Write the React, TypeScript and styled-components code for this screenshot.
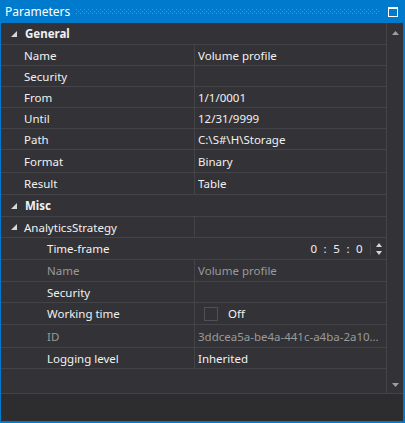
import React from "react";
import styled, { createGlobalStyle } from "styled-components";

const Global = createGlobalStyle`
  html, body { margin: 0; padding: 0; background: #2d2d30; }
  body { font-family: "Noto Sans", "Open Sans", sans-serif; font-size: 11.5px; }
`;

const Window = styled.div`
  width: 405px;
  height: 423px;
  box-sizing: border-box;
  background: #007acc;
  padding: 0 2px 2px 1px;
  display: flex;
  flex-direction: column;
  overflow: hidden;
`;

const TitleBar = styled.div`
  height: 23px;
  display: flex;
  align-items: center;
  padding-left: 4px;
  padding-right: 5px;
  gap: 6px;
  color: #ffffff;
`;

const Title = styled.span`
  line-height: 23px;
  font-size: 12px;
`;

const Dots = styled.div`
  flex: 1;
  height: 6px;
  margin-top: 1px;
  background-image:
    radial-gradient(circle at 0.5px 0.5px, #3d9ddf 0.6px, transparent 0.7px),
    radial-gradient(circle at 0.5px 0.5px, #3d9ddf 0.6px, transparent 0.7px);
  background-size: 4px 4px, 4px 4px;
  background-position: 0 0, 2px 2px;
`;

const MaxBox = styled.div`
  width: 10px;
  height: 10px;
  box-sizing: border-box;
  border: 1px solid #ffffff;
  border-top-width: 2px;
  margin-left: 3px;
`;

const Body = styled.div`
  flex: 1;
  display: flex;
  flex-direction: column;
  background: #333337;
  min-height: 0;
`;

const GridArea = styled.div`
  height: 370px;
  display: flex;
  border-bottom: 1px solid #434348;
`;

const Rows = styled.div`
  flex: 1;
  min-width: 0;
  display: flex;
  flex-direction: column;
  border-right: 1px solid #434348;
`;

const Row = styled.div<{ $h: number }>`
  height: ${(p) => p.$h}px;
  box-sizing: border-box;
  border-bottom: 1px solid #434348;
  display: flex;
  align-items: stretch;
`;

const NameCell = styled.div<{ $indent: number; $dim?: boolean; $bold?: boolean; $full?: boolean }>`
  width: ${(p) => (p.$full ? "auto" : "193px")};
  flex: ${(p) => (p.$full ? 1 : "none")};
  box-sizing: border-box;
  padding-left: ${(p) => p.$indent}px;
  display: flex;
  align-items: center;
  color: ${(p) => (p.$dim ? "#9a9a9a" : "#f1f1f1")};
  font-weight: ${(p) => (p.$bold ? 700 : 400)};
  white-space: nowrap;
  position: relative;
`;

const ValueCell = styled.div<{ $dim?: boolean; $divider?: boolean }>`
  flex: 1;
  min-width: 0;
  box-sizing: border-box;
  border-left: 1px solid ${(p) => (p.$divider === false ? "transparent" : "#434348")};
  padding-left: 3px;
  display: flex;
  align-items: center;
  color: ${(p) => (p.$dim ? "#9a9a9a" : "#f1f1f1")};
  white-space: nowrap;
  overflow: hidden;
`;

const Ellipsis = styled.span`
  min-width: 0;
  overflow: hidden;
  text-overflow: ellipsis;
  padding-right: 3px;
`;

const Expander = styled.svg`
  position: absolute;
  left: 10px;
  top: 50%;
  margin-top: -3px;
`;

const SpinValue = styled.div`
  flex: 1;
  display: flex;
  justify-content: flex-end;
  align-items: center;
  padding-right: 7px;
  word-spacing: 3px;
  letter-spacing: 0.3px;
  color: #f1f1f1;
`;

const Spinner = styled.div`
  width: 15px;
  border-left: 1px solid #434348;
  display: flex;
  flex-direction: column;
  align-items: center;
  justify-content: center;
  gap: 4px;
`;

const CheckBox = styled.div`
  width: 14px;
  height: 14px;
  box-sizing: border-box;
  border: 1px solid #4f4f55;
  margin-left: 6px;
  margin-right: 10px;
`;

const ScrollBar = styled.div`
  width: 16px;
  flex: none;
  display: flex;
  flex-direction: column;
  justify-content: space-between;
  align-items: center;
  padding: 8px 0 6px;
  box-sizing: border-box;
`;

const Description = styled.div`
  flex: 1;
  background: #2d2d30;
`;

const Tri = ({ up }: { up: boolean }) => (
  <svg width="7" height="4" viewBox="0 0 7 4">
    <polygon points={up ? "3.5,0 7,4 0,4" : "0,0 7,0 3.5,4"} fill="#9e9e9e" />
  </svg>
);

const SmallTri = ({ up }: { up: boolean }) => (
  <svg width="6" height="4" viewBox="0 0 6 4">
    <polygon points={up ? "3,0 6,4 0,4" : "0,0 6,0 3,4"} fill="#d6d6d6" />
  </svg>
);

const ExpandIcon = () => (
  <Expander width="6" height="6" viewBox="0 0 6 6">
    <polygon points="6,0 6,6 0,6" fill="#d8d8d8" />
  </Expander>
);

type Item = {
  name: string;
  value?: React.ReactNode;
  h: number;
  indent?: number;
  dim?: boolean;
  kind?: "category" | "group" | "spin" | "check" | "prop";
};

const items: Item[] = [
  { name: "General", h: 22, kind: "category" },
  { name: "Name", value: "Volume profile", h: 21 },
  { name: "Security", value: "", h: 21 },
  { name: "From", value: "1/1/0001", h: 21 },
  { name: "Until", value: "12/31/9999", h: 21 },
  { name: "Path", value: "C:\\S#\\H\\Storage", h: 21 },
  { name: "Format", value: "Binary", h: 23 },
  { name: "Result", value: "Table", h: 22 },
  { name: "Misc", h: 22, kind: "category" },
  { name: "AnalyticsStrategy", value: "", h: 21, kind: "group" },
  { name: "Time-frame", h: 22, indent: 46, kind: "spin" },
  { name: "Name", value: "Volume profile", h: 22, indent: 46, dim: true },
  { name: "Security", value: "", h: 21, indent: 46 },
  { name: "Working time", h: 22, indent: 46, kind: "check" },
  { name: "ID", value: "3ddcea5a-be4a-441c-a4ba-2a10a1b4c7d1", h: 23, indent: 46, dim: true },
  { name: "Logging level", value: "Inherited", h: 21, indent: 46 },
];

export default function App() {
  return (
    <>
      <Global />
      <Window>
        <TitleBar>
          <Title>Parameters</Title>
          <Dots />
          <MaxBox />
        </TitleBar>
        <Body>
          <GridArea>
            <Rows>
              {items.map((it, i) => {
                if (it.kind === "category") {
                  return (
                    <Row key={i} $h={it.h}>
                      <NameCell $indent={24} $bold $full>
                        <ExpandIcon />
                        {it.name}
                      </NameCell>
                    </Row>
                  );
                }
                if (it.kind === "spin") {
                  return (
                    <Row key={i} $h={it.h}>
                      <NameCell $indent={it.indent ?? 23}>{it.name}</NameCell>
                      <ValueCell $divider={false}>
                        <SpinValue>0 : 5 : 0</SpinValue>
                        <Spinner>
                          <SmallTri up />
                          <SmallTri up={false} />
                        </Spinner>
                      </ValueCell>
                    </Row>
                  );
                }
                if (it.kind === "check") {
                  return (
                    <Row key={i} $h={it.h}>
                      <NameCell $indent={it.indent ?? 23}>{it.name}</NameCell>
                      <ValueCell>
                        <CheckBox />
                        Off
                      </ValueCell>
                    </Row>
                  );
                }
                return (
                  <Row key={i} $h={it.h}>
                    <NameCell $indent={it.indent ?? 23} $dim={it.dim}>
                      {it.kind === "group" && <ExpandIcon />}
                      {it.name}
                    </NameCell>
                    <ValueCell $dim={it.dim}>
                      <Ellipsis>{it.value}</Ellipsis>
                    </ValueCell>
                  </Row>
                );
              })}
            </Rows>
            <ScrollBar>
              <Tri up />
              <Tri up={false} />
            </ScrollBar>
          </GridArea>
          <Description />
        </Body>
      </Window>
    </>
  );
}
